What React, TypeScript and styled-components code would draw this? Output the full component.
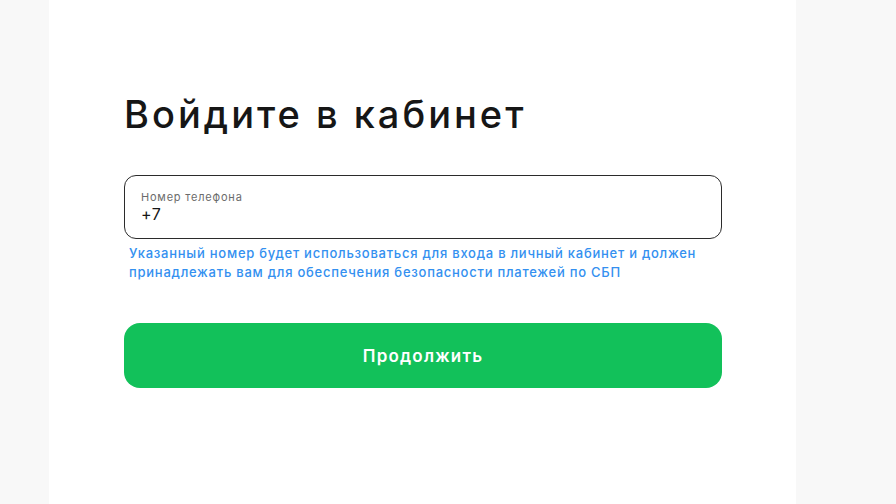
import React from "react";
import styled, { createGlobalStyle } from "styled-components";

const GlobalStyle = createGlobalStyle`
  html, body {
    margin: 0;
    padding: 0;
    background: #f8f8f8;
    font-family: Inter, "Noto Sans", sans-serif;
  }
`;

const Page = styled.div`
  display: flex;
  width: 896px;
  height: 504px;
  overflow: hidden;
`;

const Panel = styled.main`
  margin-left: 49px;
  width: 747px;
  height: 100%;
  background: #ffffff;
  padding: 91px 75px 0 75px;
  box-sizing: border-box;
`;

const Form = styled.div`
  width: 598px;
`;

const Title = styled.h1`
  margin: 0 0 38px;
  font-size: 38px;
  font-weight: 500;
  line-height: 46px;
  letter-spacing: 3px;
  color: #161616;
`;

const Field = styled.label`
  display: flex;
  flex-direction: column;
  justify-content: center;
  height: 64px;
  box-sizing: border-box;
  padding: 0 16px;
  border: 1px solid #2b2b2b;
  border-radius: 12px;
`;

const FieldLabel = styled.span`
  font-size: 11px;
  line-height: 14px;
  letter-spacing: 0.8px;
  color: #6b6b6b;
`;

const FieldInput = styled.input`
  border: none;
  outline: none;
  padding: 0;
  font-family: inherit;
  font-size: 16px;
  line-height: 20px;
  letter-spacing: 0.5px;
  color: #161616;
  background: transparent;
`;

const Hint = styled.p`
  margin: 5px 0 0 5px;
  font-size: 13px;
  font-weight: 500;
  line-height: 19px;
  letter-spacing: 0.75px;
  color: #3390f0;
`;

const Submit = styled.button`
  display: block;
  width: 100%;
  height: 65px;
  margin-top: 41px;
  border: none;
  border-radius: 16px;
  background: #12c15a;
  color: #ffffff;
  font-family: inherit;
  font-size: 17px;
  font-weight: 600;
  letter-spacing: 1.2px;
  cursor: pointer;
`;

export default function App() {
  return (
    <Page>
      <GlobalStyle />
      <Panel>
        <Form>
          <Title>Войдите в кабинет</Title>
          <Field>
            <FieldLabel>Номер телефона</FieldLabel>
            <FieldInput defaultValue="+7" />
          </Field>
          <Hint>
            Указанный номер будет использоваться для входа в личный кабинет и должен
            <br />
            принадлежать вам для обеспечения безопасности платежей по СБП
          </Hint>
          <Submit>Продолжить</Submit>
        </Form>
      </Panel>
    </Page>
  );
}
